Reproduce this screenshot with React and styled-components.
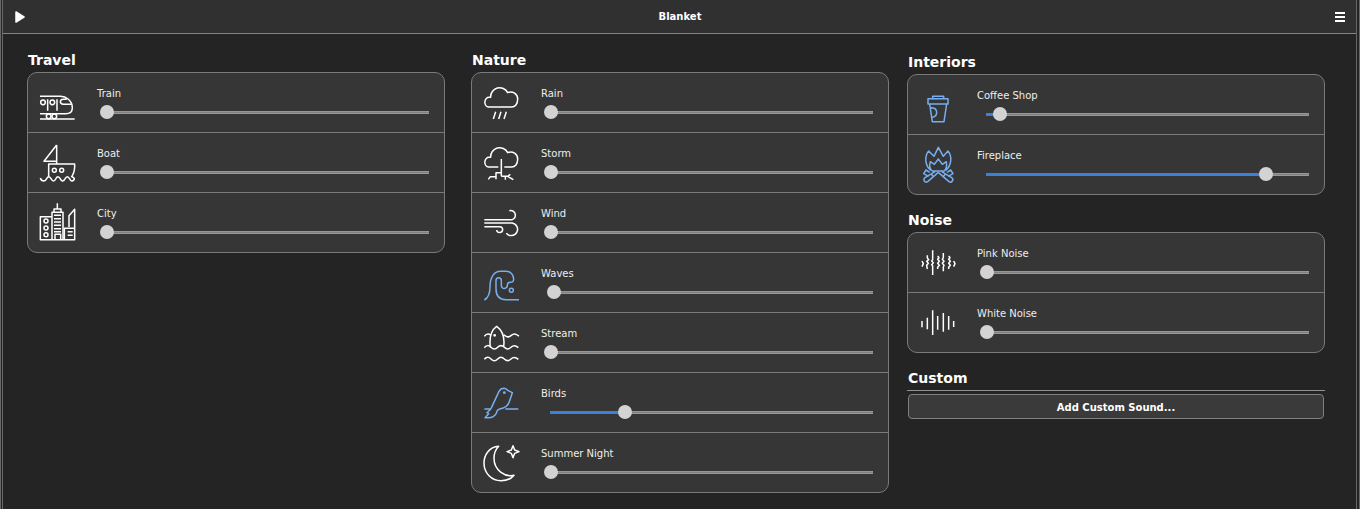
import React, { useState } from "react";
import styled, { createGlobalStyle } from "styled-components";

const GlobalStyle = createGlobalStyle`
  * { box-sizing: border-box; }
  body {
    margin: 0;
    background: #242424;
    color: #fff;
    font-family: "DejaVu Sans", "Liberation Sans", sans-serif;
    font-size: 10px;
  }
`;

const Window = styled.div`
  min-height: 100vh;
  display: flex;
  flex-direction: column;
  background: #242424;
  border-left: 3px double #686868;
  border-right: 4px double #686868;
`;

const HeaderBar = styled.header`
  display: grid;
  grid-template-columns: 1fr auto 1fr;
  align-items: center;
  height: 34px;
  padding: 1px 7px 0 8px;
  background: #303030;
  border-bottom: 1px solid #848484;
`;

const IconButton = styled.button`
  display: flex;
  justify-self: ${(p) => p.$side};
  padding: 4px;
  border: 0;
  background: none;
  color: #fff;
`;

const Title = styled.h1`
  margin: 0;
  font-size: 10px;
  line-height: 16px;
`;

const Content = styled.main`
  display: flex;
  align-items: flex-start;
  padding: 16px 31px 16px 24px;
`;

const Column = styled.div`
  flex: 1 1 0;
  min-width: 0;
  display: flex;
  flex-direction: column;
  gap: 15px;
  margin-left: ${(p) => p.$gap || 0}px;
  padding-top: ${(p) => p.$top || 0}px;
`;

const GroupTitle = styled.h2`
  margin: 0 0 2px;
  padding-left: 1px;
  font-size: 14px;
  line-height: 20px;
`;

const SoundList = styled.ul`
  margin: 0;
  padding: 0;
  list-style: none;
  background: #363636;
  border: 1px solid #7a7a7a;
  border-radius: 10px;
`;

const SoundRow = styled.li`
  display: flex;
  gap: 22px;
  padding: 12px 15px 11px 11px;
  border-bottom: 1px solid #7a7a7a;
  &:last-child { border-bottom: 0; }
`;

const Icon = styled.svg`
  flex: none;
  width: 36px;
  height: 36px;
  overflow: visible;
  fill: none;
  stroke: ${(p) => (p.$active ? "#78aeed" : "#fff")};
  stroke-width: 4.5;
  stroke-linejoin: round;
`;

const Control = styled.div`
  flex: 1;
  min-width: 0;
  display: flex;
  flex-direction: column;
  gap: 3px;
  padding-top: 1px;
`;

const SoundLabel = styled.label`
  line-height: 16px;
  color: #eee;
`;

const Slider = styled.input`
  appearance: none;
  display: block;
  height: 14px;
  margin: 0 0 0 3px;
  background: none;

  &::-webkit-slider-runnable-track {
    height: 3px;
    background:
      linear-gradient(#3d80d9, #3d80d9) 6px 0 / calc(var(--level) - 6px) 3px no-repeat,
      linear-gradient(#989898 1px, #808080 1px 2px, #989898 2px) 6px 0 no-repeat;
  }
  &::-webkit-slider-thumb {
    appearance: none;
    width: 14px;
    height: 14px;
    margin-top: -6px;
    border-radius: 50%;
    background: #d3d3d3;
  }
`;

const AddArea = styled.div`
  padding: 3px 1px 0;
  border-top: 1px solid #909090;
`;

const AddButton = styled.button`
  display: block;
  width: 100%;
  height: 25px;
  padding: 1px 0 0;
  border: 1px solid #808080;
  border-radius: 4px;
  background: #3a3a3a;
  color: #fff;
  font: bold 10px "DejaVu Sans", sans-serif;
`;

const cloud = "a12 14 0 0 1 2-29 h4 a27 27 0 0 1 51-14 a21 21 0 0 1 30 20 c0 14-8 23-18 23";
const ripple = "c7-8 13-8 20-1 s13 7 20 0 s13-7 20 0 s13 7 20 0 s13-7 22 1";

const drawings = {
  train: (
    <>
      <path d="M3 34H65C80 34 100 46 100 68C100 78 94 86 80 86H3M3 102H107M26 43V77M54 43V77M83 43H73C61 44 61 57 73 58H96" />
      <circle cx="12" cy="52" r="7" /><circle cx="40" cy="52" r="7" />
      <circle cx="29" cy="94" r="7" /><circle cx="46" cy="94" r="7" />
    </>
  ),
  boat: (
    <>
      <path d="M53 0V57M53 0L15 49H53M29 95V57H107V66Q106 85 97 96" />
      <circle cx="46" cy="76" r="6" /><circle cx="68" cy="76" r="6" />
      <path d="M4 99q2 9 11 9c8 0 8-13 14-13c8 0 7 13 14 13c8 0 7-13 14-13s7 13 14 13s7-13 14-13s7 13 13 13c6 0 8-4 8-8l-8-6" />
    </>
  ),
  city: (
    <>
      <path d="M38 35H4V104H107V13L90 32V66M39 104V22H72V104M45 22V12H66V22M55 12V-5" />
      <path d="M45 31H66M45 41H66M45 51H66M45 61H66M45 71H66M45 80H66M48 104V88H65V104M76 104V70H107M86 80H101M86 91H101" />
      <circle cx="21" cy="48" r="6" /><circle cx="21" cy="69" r="6" /><circle cx="21" cy="89" r="6" />
    </>
  ),
  rain: <path d={`M17 66${cloud}zM38 80l-7 22M54 80l-7 22M70 80l-7 22`} />,
  storm: (
    <path d={`M46 66H17${cloud}H64M55 42V94M16 103l6-8h17M39 103V83H55M55 94H74l17 10M67 94v10M74 94l8-6`} />
  ),
  wind: <path d="M4 44H80a14 14 0 1 0-1-27M4 54H87a19 19 0 1 1-17 31M4 65H52a9 9 0 1 1-11 10" />,
  waves: (
    <>
      <path d="M4 105C16 98 21 85 21 65C21 38 33 19 52 19h16c16 0 24 11 24 23c0 7-5 10-10 10c-6 0-9 4-9 9c0 12-18 13-18 0v-14c0-12-16-12-16 0v24c0 22 12 33 30 33h39" />
      <circle cx="85" cy="76" r="6" />
    </>
  ),
  stream: (
    <>
      <path d="M22 67C18 35 24 16 41 4C58 16 66 35 62 65M4 34q5-7 11-7q5 0 7 3M63 29c7 8 14 9 22 2s14-6 23 3" />
      <path d={`M4 68${ripple}M4 103${ripple}`} />
      <circle cx="35" cy="31" r="2" />
    </>
  ),
  birds: (
    <>
      <path d="M24 71L48 19Q53 10 63 10Q70 11 74 16L88 23L80 47Q75 68 50 72L43 76Q38 98 18 98H6L17 86L12 83L24 71M4 72H24M67 72H106" />
      <circle cx="64" cy="23" r="2" />
    </>
  ),
  night: (
    <path d="M47 4C18 6 3 30 3 54C3 85 26 107 54 107C72 107 86 100 93 91C66 97 33 76 33 40C33 25 38 13 47 4ZM90 2l5 13 13 5-13 5-5 13-5-13-13-5 13-5z" />
  ),
  coffee: (
    <path d="M27 35H87V51H27ZM41 35V28H74V35M32 51L40 104H75L83 51M36 62Q53 62 53 76Q53 90 39 91" />
  ),
  fire: (
    <path d="M36 70C17 56 16 28 29 12L45 28L58 1L73 28L87 12C100 28 98 56 80 70M40 72C32 66 31 54 34 44L46 52L58 36L70 52L82 44C84 56 82 66 76 72ZM32 76L21 69L14 80L29 88M84 76L95 69L102 80L87 88M48 74L18 92a7 7 0 0 0 8 12L58 76M68 74L98 92a7 7 0 0 1-8 12L58 76M36 81l8 8M80 81l-8 8" />
  ),
  pink: (
    <path d="M9 48l4 8-4 9M25 31v8l4 5-6 5 5 6-5 6 2 11M41 16v28l-3 4 5 5-5 6 3 4v27M56 33l4 5-4 5 5 6-5 6 5 6-5 6v5M73 24v14l-3 5 5 6-5 6 5 6-2 5v13M89 33l4 5-4 5 5 6-5 6 5 6-5 6v5M104 48l4 8-4 9" />
  ),
  white: <path d="M9 48V67M25 38V73M41 16V90M56 33V74M73 24V80M89 33V74M104 48V66" />,
};

function Sound({ id, name, start = 0, active = false }) {
  const [level, setLevel] = useState(start);
  return (
    <SoundRow>
      <Icon viewBox="0 0 108 108" $active={active} aria-hidden="true">{drawings[id]}</Icon>
      <Control>
        <SoundLabel htmlFor={id}>{name}</SoundLabel>
        <Slider
          id={id}
          type="range"
          min="0"
          max="100"
          step="0.5"
          value={level}
          onChange={(e) => setLevel(Number(e.target.value))}
          style={{ "--level": `${level}%` }}
        />
      </Control>
    </SoundRow>
  );
}

function Group({ title, sounds }) {
  return (
    <section>
      <GroupTitle>{title}</GroupTitle>
      <SoundList>
        {sounds.map((s) => <Sound key={s.id} {...s} />)}
      </SoundList>
    </section>
  );
}

const travel = [
  { id: "train", name: "Train" },
  { id: "boat", name: "Boat" },
  { id: "city", name: "City" },
];
const nature = [
  { id: "rain", name: "Rain" },
  { id: "storm", name: "Storm" },
  { id: "wind", name: "Wind" },
  { id: "waves", name: "Waves", start: 1, active: true },
  { id: "stream", name: "Stream" },
  { id: "birds", name: "Birds", start: 23.5, active: true },
  { id: "night", name: "Summer Night" },
];
const interiors = [
  { id: "coffee", name: "Coffee Shop", start: 4, active: true },
  { id: "fire", name: "Fireplace", start: 88.5, active: true },
];
const noise = [
  { id: "pink", name: "Pink Noise" },
  { id: "white", name: "White Noise" },
];

export default function App() {
  return (
    <>
      <GlobalStyle />
      <Window>
        <HeaderBar>
          <IconButton $side="start" aria-label="Play">
            <svg width="10" height="12" viewBox="0 0 10 12">
              <path d="M1 1L9 6L1 11Z" fill="currentColor" stroke="currentColor" strokeWidth="1.5" strokeLinejoin="round" />
            </svg>
          </IconButton>
          <Title>Blanket</Title>
          <IconButton $side="end" aria-label="Menu">
            <svg width="10" height="10" viewBox="0 0 10 10">
              <path d="M0 1H10M0 5H10M0 9H10" stroke="currentColor" strokeWidth="2" />
            </svg>
          </IconButton>
        </HeaderBar>
        <Content>
          <Column>
            <Group title="Travel" sounds={travel} />
          </Column>
          <Column $gap={26}>
            <Group title="Nature" sounds={nature} />
          </Column>
          <Column $gap={18} $top={2}>
            <Group title="Interiors" sounds={interiors} />
            <Group title="Noise" sounds={noise} />
            <section>
              <GroupTitle>Custom</GroupTitle>
              <AddArea>
                <AddButton>Add Custom Sound...</AddButton>
              </AddArea>
            </section>
          </Column>
        </Content>
      </Window>
    </>
  );
}
